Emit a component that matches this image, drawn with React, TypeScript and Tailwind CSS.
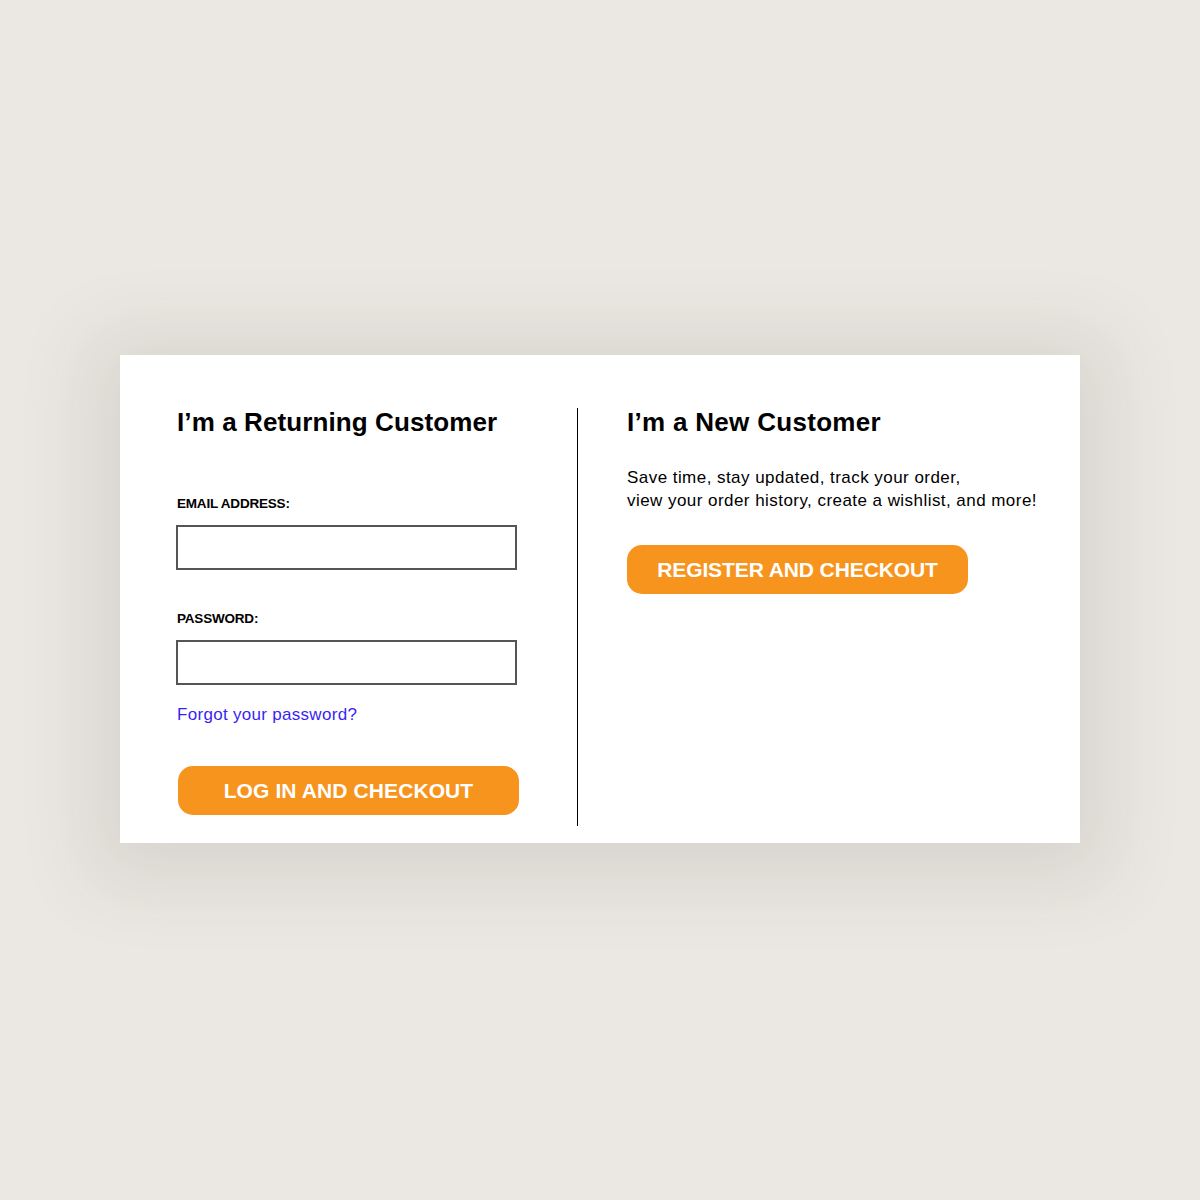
const font = { fontFamily: '"Liberation Sans", Arial, sans-serif' };

function Field({ label }: { label: string }) {
  return (
    <div>
      <label className="block text-[13.5px] font-bold tracking-[-0.2px] text-black leading-[18px]">{label}</label>
      <input className="mt-[12px] -ml-px block w-[341px] h-[45px] border-2 border-[#555] bg-white outline-none" />
    </div>
  );
}

export default function App() {
  return (
    <div style={font} className="min-h-screen w-full bg-[#ebe8e3] flex items-center justify-center pb-[2px]">
      <div className="w-[960px] h-[488px] bg-white flex pt-[53px] pb-[17px] shadow-[0_10px_70px_30px_rgba(60,50,30,0.10)]">
        <div className="w-[457px] pl-[57px]">
          <h2 className="text-[26px] font-bold leading-[28px] text-black tracking-[0.1px]">I’m a Returning Customer</h2>
          <div className="mt-[59px] flex flex-col gap-[40px]">
            <Field label="EMAIL ADDRESS:" />
            <Field label="PASSWORD:" />
          </div>
          <a href="#" className="mt-[19px] block text-[17px] text-[#3a1ff5] leading-[22px] tracking-[0.3px]">Forgot your password?</a>
          <button className="mt-[40px] ml-[1px] w-[341px] h-[49px] rounded-[15px] bg-[#f7941d] text-white text-[21px] font-bold tracking-[0.1px]">
            LOG IN AND CHECKOUT
          </button>
        </div>
        <div className="w-px bg-black" />
        <div className="pl-[49px]">
          <h2 className="text-[26px] font-bold leading-[28px] text-black tracking-[0.3px]">I’m a New Customer</h2>
          <p className="mt-[30px] text-[17px] leading-[23px] text-black tracking-[0.45px]">
            Save time, stay updated, track your order,
            <br />
            view your order history, create a wishlist, and more!
          </p>
          <button className="mt-[33px] w-[341px] h-[49px] rounded-[15px] bg-[#f7941d] text-white text-[21px] font-bold tracking-[-0.1px]">
            REGISTER AND CHECKOUT
          </button>
        </div>
      </div>
    </div>
  );
}
